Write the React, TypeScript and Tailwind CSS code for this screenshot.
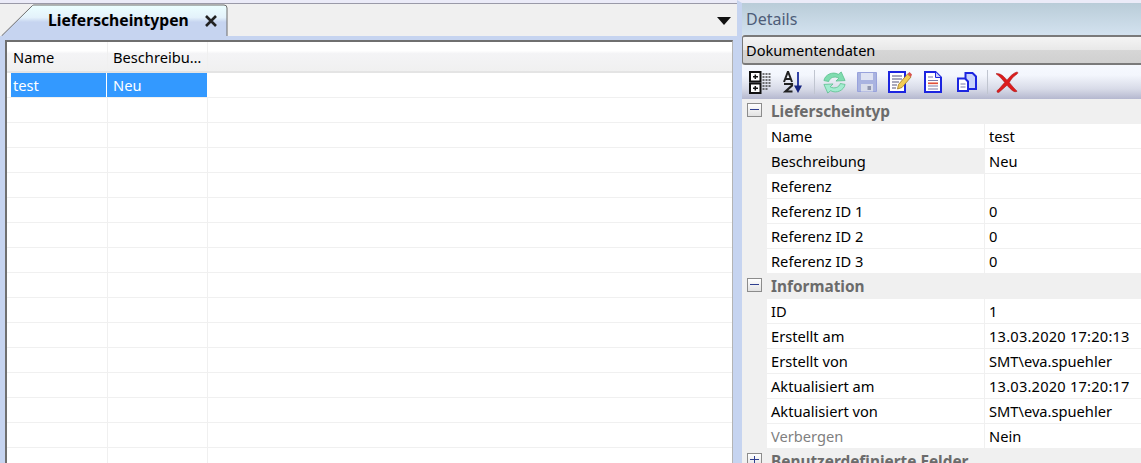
const rows = Array.from({ length: 15 });

const typRows = [
  { label: "Name", value: "test" },
  { label: "Beschreibung", value: "Neu", active: true },
  { label: "Referenz", value: "" },
  { label: "Referenz ID 1", value: "0" },
  { label: "Referenz ID 2", value: "0" },
  { label: "Referenz ID 3", value: "0" },
];

const infoRows = [
  { label: "ID", value: "1" },
  { label: "Erstellt am", value: "13.03.2020 17:20:13", wide: true },
  { label: "Erstellt von", value: "SMT\\eva.spuehler" },
  { label: "Aktualisiert am", value: "13.03.2020 17:20:17", wide: true },
  { label: "Aktualisiert von", value: "SMT\\eva.spuehler" },
  { label: "Verbergen", value: "Nein", muted: true },
];

const TabShape = () => (
  <svg className="absolute inset-0" width="228" height="33" viewBox="0 0 228 33">
    <defs>
      <linearGradient id="tabFill" x1="0" y1="0" x2="0" y2="1">
        <stop offset="0" stopColor="#ecffff" />
        <stop offset="0.4" stopColor="#e4f2fb" />
        <stop offset="0.55" stopColor="#c6d4f0" />
        <stop offset="1" stopColor="#c6d4f0" />
      </linearGradient>
    </defs>
    <path d="M1.500 33 L32.500 2.500 Q33 2 34 2 L224 2 Q227 2 227 5 L227 33" fill="url(#tabFill)" stroke="#6d6d6d" />
  </svg>
);

const Expander = ({ open }: { open: boolean }) => (
  <span className="relative block w-[15px] h-[14px] border border-[#8c8c8c] bg-[linear-gradient(#ffffff,#e2e2e2)] shrink-0">
    <span className="absolute left-[2px] right-[2px] top-[5px] h-px bg-[#2f3f8f]" />
    {!open && <span className="absolute top-[2px] bottom-[2px] left-[6px] w-px bg-[#2f3f8f]" />}
  </span>
);

const GroupHeader = ({ title, open = true }: { title: string; open?: boolean }) => (
  <div className="flex items-start h-[25px] shrink-0 bg-[#f0f0f0]">
    <div className="w-[25px] pl-[5px] pt-[4px] flex">
      <Expander open={open} />
    </div>
    <span className="pl-[4px] pt-px font-bold text-[15.4px] text-[#6b6b6b] whitespace-nowrap">{title}</span>
  </div>
);

const PropRow = ({
  label,
  value,
  active,
  muted,
  wide,
}: {
  label: string;
  value: string;
  active?: boolean;
  muted?: boolean;
  wide?: boolean;
}) => (
  <div className="flex h-[25px] shrink-0 pl-[25px] bg-[#f0f0f0]">
    <div
      className={`w-[218px] pl-[4px] pb-px flex items-center border-b border-[#f0f0f0] border-r border-r-[#f0f0f0] whitespace-nowrap ${
        active ? "bg-[#f0f0f0]" : "bg-white"
      } ${muted ? "text-[#7f7f7f]" : "text-black"}`}
    >
      {label}
    </div>
    <div
      className={`flex-1 pl-[4px] pb-px flex items-center bg-white border-b border-[#f0f0f0] text-black whitespace-nowrap ${
        wide ? "tracking-[0.2px]" : ""
      }`}
    >
      {value}
    </div>
  </div>
);

const Toolbar = () => (
  <div className="flex items-center h-[34px] shrink-0 bg-[linear-gradient(#f6f9ff,#f3f6fd_30%,#d8dbe8_70%,#b5b8cf)] pl-[7px]">
    {/* Kategorien */}
    <svg width="22" height="23" viewBox="0 0 22 23" className="shrink-0 blur-[0.3px]">
      <rect x="1" y="1" width="10.500" height="9.500" fill="#fff" stroke="#111" strokeWidth="2" />
      <rect x="1" y="12.500" width="10.500" height="9.500" fill="#fff" stroke="#111" strokeWidth="2" />
      <path d="M4 5.700h5M6.300 3.500v4.500M4 17.200h5M6.300 15v4.500" stroke="#111" strokeWidth="1.500" />
      <path d="M13.500 3h8M13.500 6h8M13.500 9h8M13.500 12h8M13.500 15h8M13.500 18h5" stroke="#444" strokeWidth="1.700" strokeDasharray="2 1" />
    </svg>
    {/* A-Z */}
    <svg width="20" height="23" viewBox="0 0 20 23" className="ml-[12px] shrink-0 blur-[0.3px]">
      <path d="M1 11 L5 0.500 L9 11 M2.500 8h5" fill="none" stroke="#222" strokeWidth="2" />
      <path d="M1 13h8v1.500l-6.500 6h7" fill="none" stroke="#222" strokeWidth="2.200" />
      <path d="M15 1v15" stroke="#1c2f9e" strokeWidth="1.800" />
      <path d="M11 14.500h8l-4 7.500z" fill="#16247f" />
    </svg>
    <span className="ml-[11px] w-px h-[24px] bg-[#c0c5d0]" />
    {/* Aktualisieren */}
    <svg width="25" height="25" viewBox="0 0 26 26" className="ml-[7px] shrink-0 blur-[0.4px]">
      <path d="M2 11 C3 5 11 1 17 4.500 L20 2 L24 11 L14.500 11.500 L17.500 8.500 C13 6 8 8 7 12 Z" fill="#7fdcb0" stroke="#58bd8a" strokeWidth="0.800" />
      <path d="M24 15 C23 21 15 25 9 21.500 L6 24 L2 15 L11.500 14.500 L8.500 17.500 C13 20 18 18 19 14 Z" fill="#a3ecd0" stroke="#58bd8a" strokeWidth="0.800" />
    </svg>
    {/* Speichern (inaktiv) */}
    <svg width="20" height="20" viewBox="0 0 20 20" className="ml-[10px] shrink-0 blur-[0.3px]">
      <path d="M0.500 0.500h19v19h-19z" fill="#a9b3e0" stroke="#98a2dc" />
      <rect x="4" y="1" width="12" height="7" fill="#dfe3f3" />
      <rect x="4" y="12" width="12" height="7.500" fill="#d8dcea" />
      <rect x="10.500" y="14" width="3.500" height="4" fill="#8f95ad" />
    </svg>
    {/* Bearbeiten */}
    <svg width="24" height="22" viewBox="0 0 24 22" className="ml-[11px] shrink-0 blur-[0.3px]">
      <path d="M1 1h16v20H1z" fill="#fff" stroke="#1c25e0" strokeWidth="2" />
      <path d="M4 5h10M4 8h10M4 11h7M4 14h5M4 17h4" stroke="#55557a" strokeWidth="1.200" />
      <path d="M9.500 18 L10.500 13.500 L19.500 3 L23 6 L14 16.500 Z" fill="#f2cc55" stroke="#a07820" strokeWidth="0.800" />
      <path d="M19.500 3 L23 6 L24 3.500 L21.500 1 Z" fill="#d9534f" />
    </svg>
    {/* Neu */}
    <svg width="18" height="22" viewBox="0 0 18 22" className="ml-[12px] shrink-0 blur-[0.3px]">
      <path d="M1 1h10.500l5.500 5.500V21H1z" fill="#fff" stroke="#1c25e0" strokeWidth="2" />
      <path d="M11.500 1v5.500H17" fill="#cdd3f5" stroke="#1c25e0" />
      <path d="M4 6h5M4 9.500h10M4 15h10M4 18h10" stroke="#7a7aa8" strokeWidth="1.200" />
      <path d="M4 12.300h10" stroke="#e0503a" strokeWidth="1.700" />
    </svg>
    {/* Kopieren */}
    <svg width="20" height="20" viewBox="0 0 20 20" className="ml-[15px] shrink-0 blur-[0.3px]">
      <path d="M8.500 1h7l3.500 3.500V17H8.500z" fill="#c9d2fa" stroke="#1c25e0" strokeWidth="2" />
      <path d="M1 6.500h7l3 3V19H1z" fill="#fff" stroke="#1c25e0" strokeWidth="2" />
      <path d="M3.500 12h5M3.500 15h5" stroke="#7a7aa8" />
    </svg>
    <span className="ml-[10px] w-px h-[24px] bg-[#c0c5d0]" />
    {/* Loeschen */}
    <svg width="24" height="22" viewBox="0 0 26 24" className="ml-[7px] shrink-0 blur-[0.3px]">
      <path d="M1 3 C5 2 9 5 13 10 C16 6 20 2 24 1 C26 2 24 3.500 23 4 C20 6 17 9.500 15.500 12.500 C18 16 21 19 24 22 C21 24 18 21 13 15.500 C10 18 7 21 4 23.500 C1.500 24 1.500 21 4 20 C6 18 8 15 10.500 12.500 C8 9 5 6 1 3 Z" fill="#dd1c1c" stroke="#a51616" strokeWidth="0.600" />
    </svg>
  </div>
);

export default function App() {
  return (
    <div className="w-[1141px] h-[463px] overflow-hidden flex bg-[#f0f0f0] text-[14.67px] font-['Noto_Sans',sans-serif]">
      {/* Listenbereich */}
      <div className="w-[737px] shrink-0 flex flex-col bg-[#c6d4f0] border-t-[3px] border-t-[#ebebf8]">
        <div className="border-t border-[#9a9aa8] h-[33px] shrink-0 bg-[#f0f0f0] flex pr-[6px]">
          <div className="relative w-[228px] h-[33px] flex items-center pl-[48px] pt-[2px] -mt-px">
            <TabShape />
            <span className="relative font-bold text-[15.67px] text-black whitespace-nowrap">Lieferscheintypen</span>
            <svg className="relative ml-[15px]" width="14" height="14" viewBox="0 0 14 14">
              <path d="M2 2l10 10M12 2L2 12" stroke="#222" strokeWidth="2.600" />
            </svg>
          </div>
          <svg className="ml-auto mt-[13px]" width="14" height="8" viewBox="0 0 14 8">
            <path d="M0 0h14L7 8z" fill="#111" />
          </svg>
        </div>
        <div className="flex-1 ml-[5px] mr-[4px] mt-[4px] border-l-2 border-t-2 border-[#6f6f6f] border-r border-r-[#b4b4b4] bg-white min-h-0">
          <div className="h-[31px] flex bg-[linear-gradient(#ffffff_0%,#ffffff_30%,#f4f4f6_40%,#f0f0f0)] border-b-2 border-[#e4e4e4]">
            <div className="w-[101px] pl-[6px] flex items-center border-r border-[#f0f0f0]">Name</div>
            <div className="w-[100px] pl-[5px] flex items-center border-r border-[#f0f0f0] whitespace-nowrap">Beschreibu…</div>
          </div>
          <div className="h-[25px] flex border-b border-[#f0f0f0]">
            <div className="w-[96px] ml-[4px] pl-[2px] pb-px flex items-center bg-[#3399ff] text-white border-r border-white">test</div>
            <div className="w-[100px] pl-[6px] pb-px flex items-center bg-[#3399ff] text-white">Neu</div>
          </div>
          {rows.map((_, i) => (
            <div key={i} className="h-[25px] flex border-b border-[#f0f0f0]">
              <div className="w-[101px] border-r border-[#f0f0f0]" />
              <div className="w-[100px] border-r border-[#f0f0f0]" />
            </div>
          ))}
        </div>
      </div>

      {/* Details */}
      <div className="flex-1 min-w-0 flex flex-col border-l-[5px] border-l-[#c6d4f0] border-t-[3px] border-t-[#ebebf8]">
        <div className="h-[32px] shrink-0 pl-[4px] flex items-center text-[16px] text-[#4e5d78] bg-[linear-gradient(#b9ccd8,#d3e2ef)]">Details</div>
        <div className="h-[30px] shrink-0 pl-[3px] pt-[2px] flex items-center bg-[linear-gradient(#f4f4f4,#e8e8e8_50%,#d6d6d6_52%,#d0d0d0)] border-t-2 border-l border-b-2 border-[#7a7a7a] rounded-l-[3px] text-[14.6px] text-black">
          Dokumentendaten
        </div>
        <Toolbar />
        <GroupHeader title="Lieferscheintyp" />
        {typRows.map((r) => (
          <PropRow key={r.label} {...r} />
        ))}
        <GroupHeader title="Information" />
        {infoRows.map((r) => (
          <PropRow key={r.label} {...r} />
        ))}
        <GroupHeader title="Benutzerdefinierte Felder" open={false} />
      </div>
    </div>
  );
}
